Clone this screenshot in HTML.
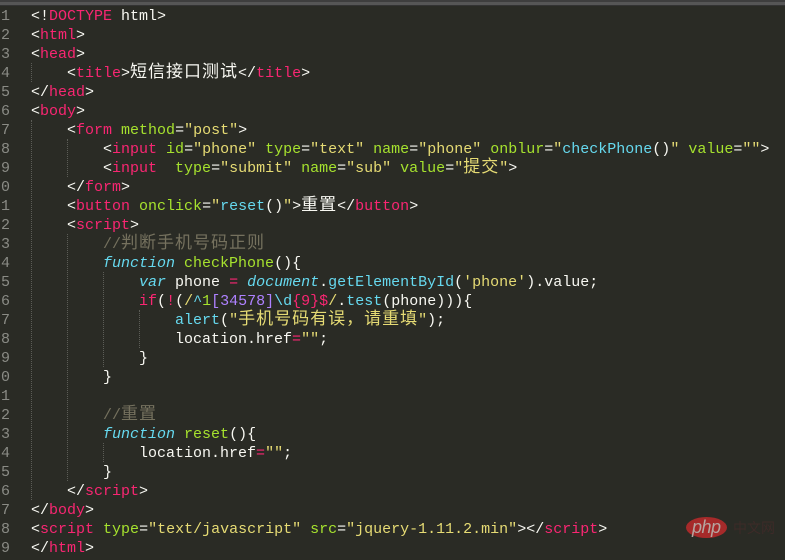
<!DOCTYPE html>
<html lang="zh">
<head>
<meta charset="utf-8">
<title>代码</title>
<style>
html,body{margin:0;padding:0;width:785px;height:560px;overflow:hidden;background:#2a2b25}
#top{position:absolute;left:0;top:0;width:785px;height:6px;background:linear-gradient(#3e3e3e 0,#3e3e3e 2px,#565656 2px,#565656 5px,#333 5px,#333 6px)}
#nums{position:absolute;left:1px;top:7px;width:12px;color:#8a8b85;font:15px/19px "Liberation Mono",monospace}
#nums div{height:19px}
#code{position:absolute;left:31px;top:7px;width:754px;color:#f8f8f2;font:15px/19px "Liberation Mono","Noto Sans CJK SC",monospace}
#code div{height:19px;white-space:pre;overflow:visible}
b,i,u,s,em{font-weight:normal;font-style:normal;text-decoration:none}
b{color:#f92672}
u{color:#a6e22e}
s{color:#e6db74}
i{color:#66d9ef}
em{color:#66d9ef;font-style:italic}
.c{color:#75715e}
.p{color:#ae81ff}
.z{font-family:"Noto Sans CJK SC",sans-serif;font-size:17px;letter-spacing:1px;line-height:0}
.g{position:absolute;width:0;border-left:1px dotted #5c5d57}
#wm{position:absolute;left:0;top:0}
</style>
</head>
<body>
<div id="top"></div>
<div class="g" style="left:31px;top:63px;height:19px"></div>
<div class="g" style="left:31px;top:120px;height:380px"></div>
<div class="g" style="left:67px;top:139px;height:38px"></div>
<div class="g" style="left:67px;top:234px;height:247px"></div>
<div class="g" style="left:103px;top:272px;height:95px"></div>
<div class="g" style="left:103px;top:443px;height:19px"></div>
<div class="g" style="left:139px;top:310px;height:38px"></div>
<div id="nums"><div>1</div><div>2</div><div>3</div><div>4</div><div>5</div><div>6</div><div>7</div><div>8</div><div>9</div><div>0</div><div>1</div><div>2</div><div>3</div><div>4</div><div>5</div><div>6</div><div>7</div><div>8</div><div>9</div><div>0</div><div>1</div><div>2</div><div>3</div><div>4</div><div>5</div><div>6</div><div>7</div><div>8</div><div>9</div></div>
<div id="code">
<div>&lt;!<b>DOCTYPE</b> html&gt;</div>
<div>&lt;<b>html</b>&gt;</div>
<div>&lt;<b>head</b>&gt;</div>
<div>    &lt;<b>title</b>&gt;<span class="z">短信接口测试</span>&lt;/<b>title</b>&gt;</div>
<div>&lt;/<b>head</b>&gt;</div>
<div>&lt;<b>body</b>&gt;</div>
<div>    &lt;<b>form</b> <u>method</u>=<s>"post"</s>&gt;</div>
<div>        &lt;<b>input</b> <u>id</u>=<s>"phone"</s> <u>type</u>=<s>"text"</s> <u>name</u>=<s>"phone"</s> <u>onblur</u>=<s>"</s><i>checkPhone</i>()<s>"</s> <u>value</u>=<s>""</s>&gt;</div>
<div>        &lt;<b>input</b>  <u>type</u>=<s>"submit"</s> <u>name</u>=<s>"sub"</s> <u>value</u>=<s>"<span class="z">提交</span>"</s>&gt;</div>
<div>    &lt;/<b>form</b>&gt;</div>
<div>    &lt;<b>button</b> <u>onclick</u>=<s>"</s><i>reset</i>()<s>"</s>&gt;<span class="z">重置</span>&lt;/<b>button</b>&gt;</div>
<div>    &lt;<b>script</b>&gt;</div>
<div>        <span class="c">//<span class="z">判断手机号码正则</span></span></div>
<div>        <em>function</em> <u>checkPhone</u>(){</div>
<div>            <em>var</em> phone <b>=</b> <em>document</em>.<i>getElementById</i>(<s>'phone'</s>).value;</div>
<div>            <b>if</b>(<b>!</b>(<s>/</s><i>^</i><u>1</u><span class="p">[34578]</span><i>\d</i><b>{9}$</b><s>/</s>.<i>test</i>(phone))){</div>
<div>                <i>alert</i>(<s>"<span class="z">手机号码有误，请重填</span>"</s>);</div>
<div>                location.href<b>=</b><s>""</s>;</div>
<div>            }</div>
<div>        }</div>
<div> </div>
<div>        <span class="c">//<span class="z">重置</span></span></div>
<div>        <em>function</em> <u>reset</u>(){</div>
<div>            location.href<b>=</b><s>""</s>;</div>
<div>        }</div>
<div>    &lt;/<b>script</b>&gt;</div>
<div>&lt;/<b>body</b>&gt;</div>
<div>&lt;<b>script</b> <u>type</u>=<s>"text/javascript"</s> <u>src</u>=<s>"jquery-1.11.2.min"</s>&gt;&lt;/<b>script</b>&gt;</div>
<div>&lt;/<b>html</b>&gt;</div>
</div>
<svg id="wm" width="785" height="560" viewBox="0 0 785 560">
<ellipse cx="706.5" cy="527.5" rx="20.5" ry="10.5" fill="#a62a2a"/>
<text x="692" y="533" font-family="Liberation Sans, sans-serif" font-size="18" font-style="italic" fill="#b5a5a0" textLength="29">php</text>
<text x="733" y="533" font-family="Liberation Sans, Noto Sans CJK SC, sans-serif" font-size="14" fill="#3d2b28">中文网</text>
</svg>
</body>
</html>
